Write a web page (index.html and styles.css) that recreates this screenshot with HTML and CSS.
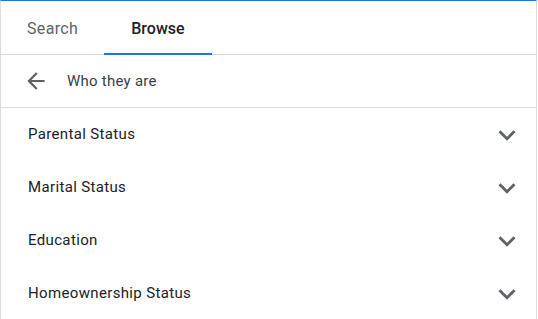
FILE: index.html
```html
<!DOCTYPE html>
<html>
<head>
<meta charset="utf-8">
<link rel="stylesheet" href="styles.css">
</head>
<body>
<div class="panel">
  <div class="tabs">
    <div class="tab">Search</div>
    <div class="tab active">Browse</div>
  </div>
  <div class="crumb">
    <svg class="back" viewBox="0 0 24 24"><path d="M20 11H7.83l5.59-5.59L12 4l-8 8 8 8 1.41-1.41L7.83 13H20v-2z" fill="#5f6368"/></svg>
    <span class="crumb-label">Who they are</span>
  </div>
  <ul class="list">
    <li class="item"><span>Parental Status</span><svg class="chev" viewBox="0 0 24 24"><path d="M16.59 8.59L12 13.17 7.41 8.59 6 10l6 6 6-6z" fill="#5f6368"/></svg></li>
    <li class="item"><span>Marital Status</span><svg class="chev" viewBox="0 0 24 24"><path d="M16.59 8.59L12 13.17 7.41 8.59 6 10l6 6 6-6z" fill="#5f6368"/></svg></li>
    <li class="item"><span>Education</span><svg class="chev" viewBox="0 0 24 24"><path d="M16.59 8.59L12 13.17 7.41 8.59 6 10l6 6 6-6z" fill="#5f6368"/></svg></li>
    <li class="item"><span>Homeownership Status</span><svg class="chev" viewBox="0 0 24 24"><path d="M16.59 8.59L12 13.17 7.41 8.59 6 10l6 6 6-6z" fill="#5f6368"/></svg></li>
  </ul>
</div>
</body>
</html>
```
FILE: styles.css
```css
* { box-sizing: border-box; }
html, body { margin: 0; padding: 0; background: #fff; }
body { font-family: Roboto, "Noto Sans", Arial, sans-serif; }
.panel {
  width: 537px;
  height: 319px;
  border-top: 1px solid #1a73e8;
  border-left: 1px solid #dadce0;
  border-right: 1px solid #dadce0;
  overflow: hidden;
}
.tabs {
  display: flex;
  height: 54px;
  border-bottom: 1px solid #dadce0;
}
.tab {
  display: flex;
  align-items: center;
  padding: 2px 26px 0;
  font-size: 16px;
  letter-spacing: 0.35px;
  color: #5f6368;
  height: 54px;
  border-bottom: 2px solid transparent;
}
.tab.active {
  color: #202124;
  font-weight: 500;
  letter-spacing: 0;
  border-bottom-color: #1a73e8;
  padding: 2px 27px 0;
}
.crumb {
  display: flex;
  align-items: center;
  height: 53px;
  border-bottom: 1px solid #dadce0;
  padding-left: 22px;
}
.back { display: block; width: 26px; height: 26px; }
.crumb-label {
  margin-left: 18px;
  font-size: 15px;
  letter-spacing: 0.25px;
  color: #3c4043;
}
.list { list-style: none; margin: 0; padding: 0; }
.item {
  display: flex;
  align-items: center;
  justify-content: space-between;
  height: 53px;
  padding: 0 12px 0 27px;
  font-size: 15px;
  letter-spacing: 0.35px;
  color: #202124;
}
.item span { margin-top: -2px; }
.chev { width: 34px; height: 34px; display: block; }
```
